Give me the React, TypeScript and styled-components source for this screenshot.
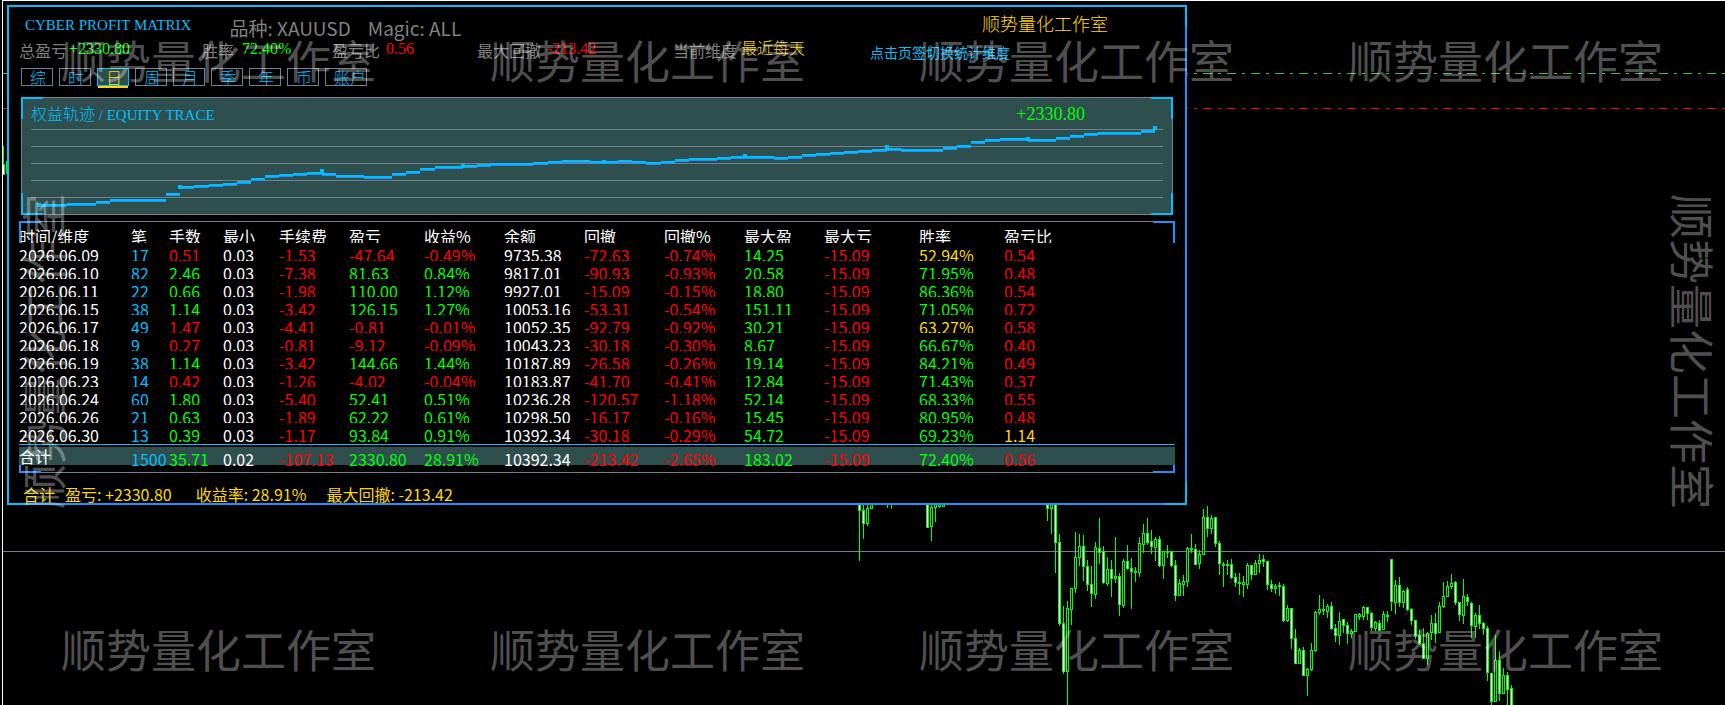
import React from "react";
import styled, { createGlobalStyle, css } from "styled-components";

const SANS = `"Noto Sans CJK SC", "Noto Sans", sans-serif`;
const SERIF = `"Liberation Serif", "Noto Sans CJK SC", serif`;

const color = {
  sky: "#00bfff",
  dodger: "#1e90ff",
  slate: "#708090",
  panel: "#2f4f4f",
  gold: "#ffd700",
  lime: "#00ff00",
  red: "#ff0000",
  gray: "#808080",
  white: "#ffffff",
};

type Tone = keyof typeof color;

const GlobalStyle = createGlobalStyle`
  body { margin: 0; background: #000; color: #fff; font-family: ${SANS}; font-size: 16px; }
  *, *::before, *::after { box-sizing: border-box; }
`;

const Frame = styled.main`
  position: relative;
  min-height: 100vh;
  margin-left: 2px;
  padding: 4px 0 0 4px;
  border-top: 1px solid #fff;
  border-left: 1px solid #fff;
  overflow: hidden;
`;

const Market = styled.svg`
  position: absolute;
  inset: 0;
  width: 100%;
  height: 100%;
  shape-rendering: crispEdges;
`;

const Panel = styled.section`
  position: relative;
  width: calc(100% - 538px);
  min-width: 1040px;
  background: #000;
  border: 2px solid;
  border-color: ${color.sky} ${color.dodger} ${color.dodger} ${color.sky};
`;

const Corner = styled.i<{ $at: "tl" | "tr" | "bl" | "br"; $tone: Tone; $h?: number; $out?: number; $side?: number }>`
  position: absolute;
  width: 22px;
  height: ${(p) => p.$h ?? 22}px;
  border: 0 solid ${(p) => color[p.$tone]};
  ${(p) => (p.$at[0] === "t"
    ? css`top: -${p.$out ?? 1}px; border-top-width: 2px;`
    : css`bottom: -${p.$out ?? 1}px; border-bottom-width: 2px;`)}
  ${(p) => (p.$at[1] === "l"
    ? css`left: -${p.$side ?? p.$out ?? 1}px; border-left-width: 2px;`
    : css`right: -${p.$side ?? p.$out ?? 1}px; border-right-width: 2px;`)}
`;

const Header = styled.header`
  display: flex;
  align-items: flex-start;
  height: 32px;
  padding: 6px 77px 0 16px;
`;

const Title = styled.h1`
  margin: 0 38px 0 0;
  font: 400 15px/24px ${SERIF};
  color: ${color.sky};
  white-space: pre;
`;

const Meta = styled.p`
  margin: 0;
  font-size: 19px;
  line-height: 30px;
  color: ${color.gray};
  white-space: pre;
`;

const Studio = styled.p`
  margin: 0 0 0 auto;
  font-size: 18px;
  line-height: 20px;
  font-weight: 300;
  color: ${color.gold};
`;

const Stats = styled.dl`
  display: grid;
  grid-template-columns: 183px 130px 145px 196px 197px auto;
  height: 29px;
  margin: 0;
  padding-left: 10px;
  white-space: nowrap;
`;

const Stat = styled.div<{ $gap?: number }>`
  display: flex;
  align-items: flex-start;
  gap: ${(p) => p.$gap ?? 6}px;
`;

const StatLabel = styled.dt`
  line-height: 22px;
  color: ${color.gray};
`;

const StatValue = styled.dd<{ $tone: Tone; $text?: boolean }>`
  margin: 0;
  font: ${(p) => (p.$text ? `300 16px/16px ${SANS}` : `400 16px/20px ${SERIF}`)};
  color: ${(p) => color[p.$tone]};
`;

const Hint = styled.div`
  font-size: 14px;
  line-height: 26px;
  color: ${color.sky};
`;

const Tabs = styled.nav`
  display: flex;
  gap: 6px;
  padding-left: 12px;
`;

const Tab = styled.button<{ $active?: boolean; $wide?: boolean }>`
  position: relative;
  width: ${(p) => (p.$wide ? 42 : 32)}px;
  height: 18px;
  padding: 0 0 0 8px;
  border: 1px solid ${color.slate};
  background: ${(p) => (p.$active ? color.panel : "#000")};
  color: ${(p) => (p.$active ? color.gold : color.sky)};
  font: 300 16px/16px ${SANS};
  text-align: left;
  white-space: nowrap;
  cursor: pointer;
  ${(p) => p.$active && css`
    border-color: ${color.sky};
    &::after {
      content: "";
      position: absolute;
      left: 0;
      right: 0;
      bottom: -3px;
      height: 2px;
      background: ${color.gold};
    }
  `}
`;

const Trace = styled.section`
  position: relative;
  height: 118px;
  margin: 11px 12px 0;
  border: 1px solid ${color.slate};
  background: ${color.panel};
`;

const TracePlot = styled.svg`
  position: absolute;
  inset: 0;
  width: 100%;
  height: 100%;
  shape-rendering: crispEdges;
`;

const TraceHead = styled.div`
  display: flex;
  justify-content: space-between;
  padding: 5px 87px 0 9px;
  line-height: 22px;
`;

const TraceTitle = styled.h2`
  margin: 0;
  font: 300 16px/20px ${SANS};
  color: ${color.sky};
`;

const Latin = styled.span`
  font: 400 15px/20px ${SERIF};
  white-space: pre;
`;

const TraceTotal = styled.output`
  font: 400 18px/22px ${SERIF};
  color: ${color.lime};
`;

const Ledger = styled.section`
  position: relative;
  margin: 6px 10px 0;
  padding: 3px 0 7px;
  border-top: 1px solid ${color.slate};
  border-bottom: 1px solid ${color.slate};
`;

const Table = styled.table`
  width: 100%;
  table-layout: fixed;
  border-collapse: separate;
  border-spacing: 0;
  text-align: left;
  th, td { padding: 0; font-weight: 400; vertical-align: top; }
  tbody tr:last-child td {
    padding-bottom: 3px;
    border-bottom: 1px solid ${color.sky};
  }
  tfoot td {
    padding-top: 2px;
    background: ${color.panel} content-box;
  }
`;

const Cell = styled.div<{ $tone?: Tone; $open?: boolean; $line?: number }>`
  height: 18px;
  line-height: ${(p) => p.$line ?? 24}px;
  overflow: ${(p) => (p.$open ? "visible" : "hidden")};
  white-space: nowrap;
  color: ${(p) => color[p.$tone ?? "white"]};
`;

const Summary = styled.footer`
  display: flex;
  height: 30px;
  padding: 13px 0 0 14px;
  line-height: 16px;
  color: ${color.gold};
  white-space: nowrap;
`;

const SummaryItem = styled.span<{ $after: number }>`
  margin-right: ${(p) => p.$after}px;
`;

const Marks = styled.div`
  position: absolute;
  inset: 0;
  pointer-events: none;
  color: rgba(255, 255, 255, 0.33);
  font-size: 45px;
  line-height: 60px;
  white-space: nowrap;
`;

const MarkRow = styled.div<{ $top: number }>`
  position: absolute;
  top: ${(p) => p.$top}px;
  left: 58px;
  display: flex;
  gap: 114px;
`;

const MarkSide = styled.div<{ $left?: boolean }>`
  position: absolute;
  top: 193px;
  writing-mode: vertical-rl;
  text-orientation: sideways;
  ${(p) => (p.$left ? css`left: 10px; transform: rotate(180deg);` : css`right: 2px;`)}
`;

const STUDIO = "顺势量化工作室";

const columns: [string, number | null][] = [
  ["时间/维度", 112], ["笔", 38], ["手数", 54], ["最小", 56], ["手续费", 70], ["盈亏", 75], ["收益%", 80],
  ["余额", 80], ["回撤", 80], ["回撤%", 80], ["最大盈", 80], ["最大亏", 95], ["胜率", 85], ["盈亏比", null],
];

const rows = `
2026.06.09 17 0.51 0.03 -1.53 -47.64 -0.49% 9735.38 -72.63 -0.74% 14.25 -15.09 52.94% 0.54
2026.06.10 82 2.46 0.03 -7.38 81.63 0.84% 9817.01 -90.93 -0.93% 20.58 -15.09 71.95% 0.48
2026.06.11 22 0.66 0.03 -1.98 110.00 1.12% 9927.01 -15.09 -0.15% 18.80 -15.09 86.36% 0.54
2026.06.15 38 1.14 0.03 -3.42 126.15 1.27% 10053.16 -53.31 -0.54% 151.11 -15.09 71.05% 0.72
2026.06.17 49 1.47 0.03 -4.41 -0.81 -0.01% 10052.35 -92.79 -0.92% 30.21 -15.09 63.27% 0.58
2026.06.18 9 0.27 0.03 -0.81 -9.12 -0.09% 10043.23 -30.18 -0.30% 8.67 -15.09 66.67% 0.40
2026.06.19 38 1.14 0.03 -3.42 144.66 1.44% 10187.89 -26.58 -0.26% 19.14 -15.09 84.21% 0.49
2026.06.23 14 0.42 0.03 -1.26 -4.02 -0.04% 10183.87 -41.70 -0.41% 12.84 -15.09 71.43% 0.37
2026.06.24 60 1.80 0.03 -5.40 52.41 0.51% 10236.28 -120.57 -1.18% 52.14 -15.09 68.33% 0.55
2026.06.26 21 0.63 0.03 -1.89 62.22 0.61% 10298.50 -16.17 -0.16% 15.45 -15.09 80.95% 0.48
2026.06.30 13 0.39 0.03 -1.17 93.84 0.91% 10392.34 -30.18 -0.29% 54.72 -15.09 69.23% 1.14
`.trim().split("\n").map((line) => line.split(" "));

const total = "合计 1500 35.71 0.02 -107.13 2330.80 28.91% 10392.34 -213.42 -2.65% 183.02 -15.09 72.40% 0.56".split(" ");

function toneOf(row: string[], i: number): Tone {
  const value = parseFloat(row[i]);
  if (i === 1) return "sky";
  if (i === 2) return parseFloat(row[5]) < 0 ? "red" : "lime";
  if (i === 0 || i === 3 || i === 7) return "white";
  if (i === 12) return value < 65 ? "gold" : "lime";
  if (i === 13) return value >= 1 ? "gold" : "red";
  return value < 0 ? "red" : "lime";
}

const tabs = ["综", "时", "日", "周", "月", "季", "年", "币", "账户"];

// Equity steps: start x and y inside the plot; each runs to the next start.
const steps: [number, number][] = [
  [16, 107], [45, 106], [74, 104], [88, 102], [144, 96], [158, 89], [172, 88], [187, 87], [201, 86], [215, 84],
  [229, 81], [243, 78], [257, 77], [271, 76], [285, 75], [300, 76], [314, 78], [342, 79], [370, 76], [384, 74],
  [398, 71], [413, 69], [441, 68], [455, 67], [469, 66], [511, 65], [526, 64], [540, 63], [568, 64], [596, 63],
  [610, 64], [624, 65], [639, 64], [653, 62], [667, 61], [695, 60], [709, 59], [752, 60], [766, 59], [780, 57],
  [794, 56], [808, 55], [822, 54], [836, 53], [850, 52], [865, 51], [879, 52], [921, 50], [935, 48], [949, 44],
  [963, 42], [978, 41], [1006, 42], [1034, 40], [1048, 38], [1062, 36], [1076, 35], [1119, 33], [1133, 33],
];
const peaks: [number, number][] = [
  [16, 105], [157, 87], [299, 71], [440, 66], [581, 62], [722, 56], [864, 47], [1005, 39], [1132, 28],
];

// Candles as [column, high, low, body top, body bottom, falling], heights in thirds of a pixel.
const candles: number[][] = [
  [0, 60, 243, 60, 92, 1], [1, 60, 177, 91, 131, 1], [2, 60, 140, 85, 131, 0], [3, 60, 87, 60, 86, 0],
  [7, 60, 84, 60, 63, 0], [8, 60, 87, 60, 63, 0], [17, 60, 143, 60, 143, 1], [18, 60, 183, 82, 140, 0],
  [19, 60, 126, 60, 83, 0], [20, 60, 84, 60, 78, 0], [21, 60, 80, 60, 78, 0], [47, 60, 123, 60, 86, 1],
  [48, 60, 162, 60, 86, 0], [49, 60, 279, 60, 188, 1], [50, 162, 438, 187, 431, 1], [51, 378, 582, 430, 575, 1],
  [52, 363, 675, 385, 575, 0], [53, 324, 435, 325, 389, 0], [54, 156, 339, 232, 326, 0], [55, 162, 258, 199, 233, 0],
  [56, 165, 303, 199, 260, 1], [57, 240, 333, 259, 314, 1], [58, 258, 381, 313, 341, 1], [59, 186, 357, 202, 344, 0],
  [60, 114, 252, 205, 218, 1], [61, 198, 312, 214, 308, 1], [62, 231, 318, 268, 311, 0], [63, 240, 351, 268, 296, 1],
  [64, 171, 309, 289, 296, 0], [65, 279, 408, 289, 374, 1], [66, 237, 384, 244, 377, 0], [67, 195, 270, 244, 266, 1],
  [68, 234, 387, 265, 275, 1], [69, 261, 306, 274, 278, 0], [70, 171, 291, 190, 278, 0], [71, 132, 219, 160, 194, 0],
  [72, 114, 195, 160, 188, 1], [73, 150, 222, 184, 200, 1], [74, 171, 243, 178, 203, 0], [75, 168, 261, 178, 257, 1],
  [76, 214, 297, 215, 257, 0], [77, 195, 234, 214, 218, 0], [78, 214, 261, 215, 257, 1], [79, 240, 363, 256, 347, 1],
  [80, 297, 350, 310, 347, 0], [81, 285, 348, 304, 314, 0], [82, 201, 321, 205, 305, 0], [83, 162, 219, 205, 209, 0],
  [84, 192, 255, 208, 254, 1], [85, 210, 267, 223, 251, 0], [86, 87, 225, 112, 223, 0], [87, 78, 171, 112, 146, 1],
  [88, 105, 162, 115, 146, 0], [89, 111, 201, 112, 191, 1], [90, 183, 285, 190, 251, 1], [91, 246, 321, 253, 257, 0],
  [92, 240, 285, 253, 257, 0], [93, 237, 297, 253, 293, 1], [94, 279, 321, 291, 308, 1], [95, 279, 345, 306, 309, 0],
  [96, 288, 351, 307, 314, 0], [97, 249, 327, 256, 314, 0], [98, 255, 300, 256, 284, 1], [99, 240, 285, 250, 284, 0],
  [100, 222, 279, 241, 251, 0], [101, 225, 261, 238, 245, 1], [102, 243, 330, 244, 314, 1], [103, 300, 336, 313, 326, 1],
  [104, 312, 342, 319, 326, 0], [105, 306, 348, 316, 320, 0], [106, 312, 426, 319, 422, 1], [107, 375, 426, 385, 422, 0],
  [108, 384, 507, 385, 476, 1], [109, 447, 552, 475, 551, 1], [110, 504, 552, 511, 551, 0], [111, 501, 588, 511, 587, 1],
  [112, 564, 648, 568, 587, 0], [113, 489, 573, 511, 569, 0], [114, 393, 516, 397, 512, 0], [115, 345, 405, 388, 398, 0],
  [116, 357, 405, 388, 392, 0], [117, 372, 414, 379, 393, 0], [118, 366, 450, 379, 444, 1], [119, 432, 486, 445, 467, 1],
  [120, 396, 495, 424, 467, 0], [121, 417, 459, 418, 437, 1], [122, 426, 492, 436, 461, 1], [123, 447, 474, 454, 461, 0],
  [124, 402, 456, 403, 455, 0], [125, 399, 420, 403, 410, 0], [126, 378, 420, 382, 410, 0], [127, 381, 420, 382, 401, 1],
  [128, 396, 453, 400, 443, 1], [129, 423, 453, 427, 444, 0], [130, 420, 453, 430, 452, 1], [131, 393, 450, 403, 449, 0],
  [132, 393, 426, 406, 410, 0], [133, 237, 393, 238, 365, 1], [134, 300, 402, 316, 368, 0], [135, 291, 381, 316, 368, 1],
  [136, 330, 384, 334, 368, 0], [137, 321, 393, 328, 389, 1], [138, 384, 435, 388, 422, 1], [139, 420, 477, 421, 467, 1],
  [140, 450, 495, 466, 491, 1], [141, 444, 537, 490, 536, 1], [142, 456, 555, 460, 536, 0], [143, 405, 480, 430, 458, 0],
  [144, 399, 489, 430, 461, 1], [145, 366, 459, 379, 458, 0], [146, 306, 384, 349, 380, 0], [147, 303, 351, 319, 350, 0],
  [148, 282, 327, 310, 320, 0], [149, 303, 375, 307, 368, 1], [150, 366, 423, 367, 404, 1], [151, 297, 432, 349, 407, 0],
  [152, 342, 378, 352, 365, 1], [153, 366, 474, 370, 437, 1], [154, 399, 474, 406, 440, 0], [155, 375, 447, 406, 430, 1],
  [156, 426, 465, 430, 446, 1], [157, 438, 603, 445, 578, 1], [158, 580, 680, 580, 665, 1], [159, 465, 666, 541, 665, 0],
  [160, 513, 663, 541, 641, 1], [161, 564, 642, 586, 641, 0], [162, 576, 690, 586, 629, 1], [163, 615, 690, 625, 690, 1],
];

function Candle({ data }: { data: number[] }) {
  const [col, high, low, top, bottom, falling] = data;
  const x = 856 + col * 4;
  const y = (v: number) => 479 + Math.floor(v / 3);
  const bodyHeight = Math.max(1, y(bottom) - y(top) + 1);
  return (
    <g>
      <rect x={x} y={y(high)} width={1} height={y(low) - y(high)} fill={color.lime} />
      <rect x={x - 1} y={y(top)} width={3} height={bodyHeight} fill={color.lime} />
      {bodyHeight > 2 && (
        <rect x={x} y={y(top) + 1} width={1} height={bodyHeight - 2} fill={falling ? "#fff" : "#000"} />
      )}
    </g>
  );
}

export default function App() {
  return (
    <>
      <GlobalStyle />
      <Frame>
        <Market aria-hidden="true">
          <line x1="0" x2="100%" y1="72.5" y2="72.5" stroke="#32cd32" strokeDasharray="9 6 3 6" />
          <line x1="0" x2="100%" y1="107.5" y2="107.5" stroke={color.red} strokeDasharray="9 6 3 6" />
          <line x1="0" x2="100%" y1="550.5" y2="550.5" stroke={color.slate} />
          <rect x="0" y="145" width="1" height="29" fill={color.lime} />
          <rect x="0" y="164" width="1" height="9" fill="#fff" />
          <rect x="1" y="163" width="1" height="11" fill={color.lime} />
          <rect x="3" y="160" width="1" height="13" fill={color.lime} />
          {candles.map((c) => <Candle key={c[0]} data={c} />)}
        </Market>

        <Panel>
          <Header>
            <Title>CYBER PROFIT MATRIX</Title>
            <Meta>{"品种: XAUUSD    Magic: ALL"}</Meta>
            <Studio>{STUDIO}</Studio>
          </Header>

          <Stats>
            <Stat $gap={2}><StatLabel>总盈亏</StatLabel><StatValue $tone="lime">+2330.80</StatValue></Stat>
            <Stat $gap={8}><StatLabel>胜率</StatLabel><StatValue $tone="lime">72.40%</StatValue></Stat>
            <Stat><StatLabel>盈亏比</StatLabel><StatValue $tone="red">0.56</StatValue></Stat>
            <Stat><StatLabel>最大回撤</StatLabel><StatValue $tone="red">-213.42</StatValue></Stat>
            <Stat $gap={4}><StatLabel>当前维度</StatLabel><StatValue $tone="gold" $text>最近每天</StatValue></Stat>
            <Hint>点击页签切换统计维度</Hint>
          </Stats>

          <Tabs>
            {tabs.map((t) => <Tab key={t} type="button" $active={t === "日"} $wide={t.length > 1}>{t}</Tab>)}
          </Tabs>

          <Trace>
            <TracePlot viewBox="0 0 1150 116" preserveAspectRatio="none" aria-hidden="true">
              {[31, 48, 65, 82, 99].map((y) => (
                <rect key={y} x="9" y={y} width="1132" height="1" fill={color.slate} />
              ))}
              {steps.slice(0, -1).map(([x, y], i) => (
                <g key={x}>
                  <rect x={x} y={y - 1} width={steps[i + 1][0] - x} height="2" fill={color.sky} />
                  <rect x={x} y={y + 1} width={steps[i + 1][0] - x} height="1" fill={color.dodger} />
                </g>
              ))}
              {peaks.map(([x, y]) => <rect key={x} x={x - 1} y={y} width="4" height="4" fill={color.sky} />)}
            </TracePlot>
            <TraceHead>
              <TraceTitle>权益轨迹<Latin>{" / EQUITY TRACE"}</Latin></TraceTitle>
              <TraceTotal>+2330.80</TraceTotal>
            </TraceHead>
            <Corner $at="tl" $tone="sky" />
            <Corner $at="tr" $tone="sky" />
            <Corner $at="bl" $tone="sky" />
            <Corner $at="br" $tone="sky" />
          </Trace>

          <Ledger>
            <Corner $at="tl" $tone="dodger" $side={0} />
            <Corner $at="tr" $tone="dodger" $side={0} />
            <Corner $at="bl" $tone="dodger" $h={8} $side={0} />
            <Corner $at="br" $tone="dodger" $h={8} $side={0} />
            <Table>
              <colgroup>
                {columns.map(([name, width]) => <col key={name} width={width ?? undefined} />)}
              </colgroup>
              <thead>
                <tr>{columns.map(([name]) => <th key={name} scope="col"><Cell $line={22}>{name}</Cell></th>)}</tr>
              </thead>
              <tbody>
                {rows.map((row, r) => (
                  <tr key={row[0]}>
                    {row.map((value, i) => (
                      <td key={i}><Cell $tone={toneOf(row, i)} $open={r === rows.length - 1}>{value}</Cell></td>
                    ))}
                  </tr>
                ))}
              </tbody>
              <tfoot>
                <tr>
                  {total.map((value, i) => (
                    <td key={i}><Cell $tone={toneOf(total, i)} $open $line={i === 0 ? 18 : 24}>{value}</Cell></td>
                  ))}
                </tr>
              </tfoot>
            </Table>
          </Ledger>

          <Summary>
            <SummaryItem $after={10}>合计</SummaryItem>
            <SummaryItem $after={24}>盈亏: +2330.80</SummaryItem>
            <SummaryItem $after={20}>收益率: 28.91%</SummaryItem>
            <SummaryItem $after={0}>最大回撤: -213.42</SummaryItem>
          </Summary>
          <Corner $at="tr" $tone="sky" $out={2} />
          <Corner $at="bl" $tone="sky" $out={2} />
          <Corner $at="br" $tone="sky" $out={2} />
        </Panel>

        <Marks aria-hidden="true">
          <MarkRow $top={29}>{[0, 1, 2, 3].map((i) => <span key={i}>{STUDIO}</span>)}</MarkRow>
          <MarkRow $top={618}>{[0, 1, 2, 3].map((i) => <span key={i}>{STUDIO}</span>)}</MarkRow>
          <MarkSide $left>{STUDIO}</MarkSide>
          <MarkSide>{STUDIO}</MarkSide>
        </Marks>
      </Frame>
    </>
  );
}
